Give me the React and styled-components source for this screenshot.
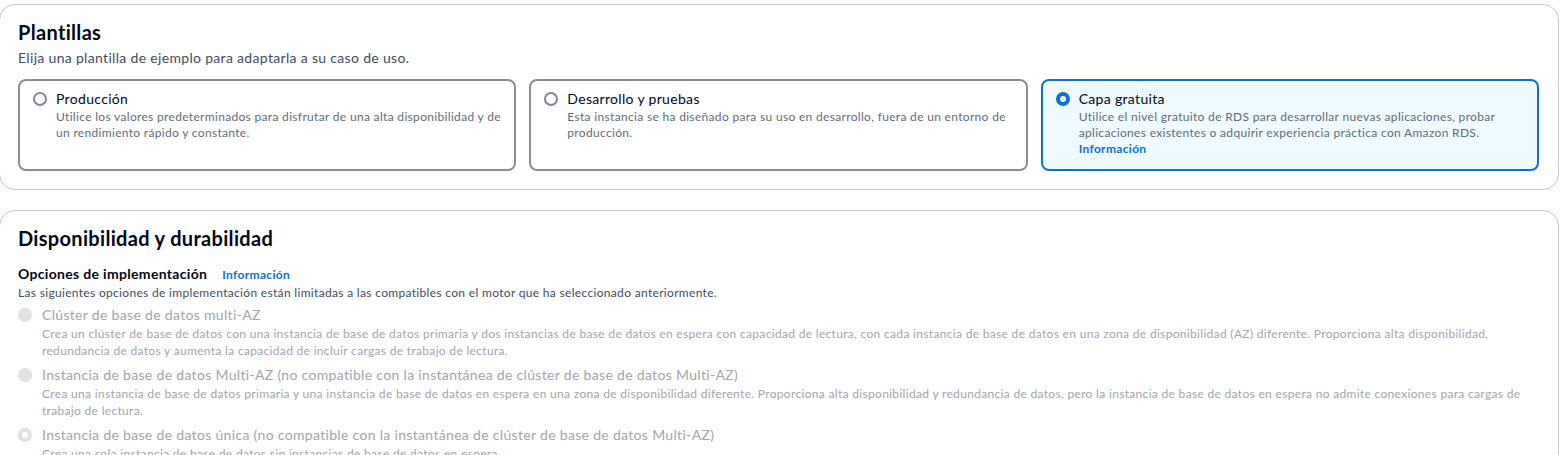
import React from "react";
import styled, { createGlobalStyle, css } from "styled-components";

const Global = createGlobalStyle`
  * { box-sizing: border-box; }
  html, body { margin: 0; padding: 0; background: #ffffff; }
  body {
    font-family: Lato, "Liberation Sans", sans-serif;
    letter-spacing: 0.02em;
    color: #000716;
    overflow: hidden;
  }
`;

const Page = styled.div`
  display: flex;
  flex-direction: column;
  gap: 20px;
  padding: 4px 1px 0 0;
`;

const Container = styled.section`
  border: 1px solid #c6c6cd;
  border-radius: 16px;
  padding: 15px 19px 18px 18px;
  background: #fff;
  margin-left: -1px;
`;

const Title = styled.h2`
  margin: 0;
  font-size: 20px;
  line-height: 24px;
  font-weight: 700;
  color: #000716;
`;

const Subtitle = styled.p`
  margin: 4px 0 0;
  font-size: 14px;
  line-height: 20px;
  color: #414d5c;
`;

const Tiles = styled.div`
  display: grid;
  grid-template-columns: repeat(3, 1fr);
  gap: 13px;
  margin-top: 11px;
`;

const Tile = styled.div`
  border: 2px solid ${(p) => (p.$selected ? "#0972d3" : "#8c8c94")};
  background: ${(p) => (p.$selected ? "#f0fbff" : "#fff")};
  border-radius: 8px;
  padding: 8px 12px 12px 13px;
  display: flex;
  gap: 9px;
  align-items: flex-start;
`;

const Radio = styled.span`
  flex: none;
  width: 14px;
  height: 14px;
  border-radius: 50%;
  margin-top: 3px;
  ${(p) =>
    p.$variant === "checked"
      ? css`border: 4px solid #0972d3; background: #fff;`
      : p.$variant === "disabled"
      ? css`background: #e0e0e5; border: none;`
      : p.$variant === "disabledChecked"
      ? css`border: 4px solid #e0e0e5; background: #fff;`
      : css`border: 2px solid #7d8998; background: #fff;`}
`;

const TileBody = styled.div`
  display: flex;
  flex-direction: column;
`;

const Label = styled.span`
  font-size: 14px;
  line-height: 20px;
  color: ${(p) => (p.$disabled ? "#a4a4ad" : "#000716")};
`;

const Desc = styled.span`
  font-size: 12px;
  line-height: 16px;
  color: ${(p) => (p.$disabled ? "#a4a4ad" : "#5f6b7a")};
`;

const Link = styled.a`
  font-size: 12px;
  line-height: 16px;
  font-weight: 700;
  color: #0972d3;
  text-decoration: none;
`;

const FieldHead = styled.div`
  margin-top: 14px;
  display: flex;
  align-items: baseline;
  gap: 15px;
`;

const FieldLabel = styled.span`
  font-size: 14px;
  line-height: 20px;
  font-weight: 700;
  color: #000716;
`;

const FieldDesc = styled.div`
  margin-top: 1px;
  font-size: 12px;
  line-height: 16px;
  color: #414d5c;
`;

const Options = styled.div`
  display: flex;
  flex-direction: column;
  gap: 6px;
  margin-top: 4px;
  padding-right: 10px;
`;

const Option = styled.div`
  display: flex;
  gap: 10px;
  align-items: flex-start;
`;

const OptionBody = styled.div`
  display: flex;
  flex-direction: column;
`;

const OptionDesc = styled(Desc)`
  line-height: 17px;
`;

const templates = [
  {
    label: "Producción",
    desc: "Utilice los valores predeterminados para disfrutar de una alta disponibilidad y de un rendimiento rápido y constante.",
  },
  {
    label: "Desarrollo y pruebas",
    desc: "Esta instancia se ha diseñado para su uso en desarrollo, fuera de un entorno de producción.",
  },
  {
    label: "Capa gratuita",
    desc: "Utilice el nivel gratuito de RDS para desarrollar nuevas aplicaciones, probar aplicaciones existentes o adquirir experiencia práctica con Amazon RDS.",
    selected: true,
    info: true,
  },
];

const options = [
  {
    label: "Clúster de base de datos multi-AZ",
    desc: "Crea un clúster de base de datos con una instancia de base de datos primaria y dos instancias de base de datos en espera con capacidad de lectura, con cada instancia de base de datos en una zona de disponibilidad (AZ) diferente. Proporciona alta disponibilidad, redundancia de datos y aumenta la capacidad de incluir cargas de trabajo de lectura.",
  },
  {
    label: "Instancia de base de datos Multi-AZ (no compatible con la instantánea de clúster de base de datos Multi-AZ)",
    desc: "Crea una instancia de base de datos primaria y una instancia de base de datos en espera en una zona de disponibilidad diferente. Proporciona alta disponibilidad y redundancia de datos, pero la instancia de base de datos en espera no admite conexiones para cargas de trabajo de lectura.",
  },
  {
    label: "Instancia de base de datos única (no compatible con la instantánea de clúster de base de datos Multi-AZ)",
    desc: "Crea una sola instancia de base de datos sin instancias de base de datos en espera.",
    checked: true,
  },
];

export default function App() {
  return (
    <>
      <Global />
      <Page>
        <Container>
          <Title>Plantillas</Title>
          <Subtitle>Elija una plantilla de ejemplo para adaptarla a su caso de uso.</Subtitle>
          <Tiles>
            {templates.map((t) => (
              <Tile key={t.label} $selected={t.selected}>
                <Radio $variant={t.selected ? "checked" : "unchecked"} />
                <TileBody>
                  <Label>{t.label}</Label>
                  <Desc>{t.desc}</Desc>
                  {t.info && <Link href="#">Información</Link>}
                </TileBody>
              </Tile>
            ))}
          </Tiles>
        </Container>
        <Container>
          <Title>Disponibilidad y durabilidad</Title>
          <FieldHead>
            <FieldLabel>Opciones de implementación</FieldLabel>
            <Link href="#">Información</Link>
          </FieldHead>
          <FieldDesc>
            Las siguientes opciones de implementación están limitadas a las compatibles con el motor que ha seleccionado anteriormente.
          </FieldDesc>
          <Options>
            {options.map((o) => (
              <Option key={o.label}>
                <Radio $variant={o.checked ? "disabledChecked" : "disabled"} />
                <OptionBody>
                  <Label $disabled>{o.label}</Label>
                  <OptionDesc $disabled>{o.desc}</OptionDesc>
                </OptionBody>
              </Option>
            ))}
          </Options>
        </Container>
      </Page>
    </>
  );
}
